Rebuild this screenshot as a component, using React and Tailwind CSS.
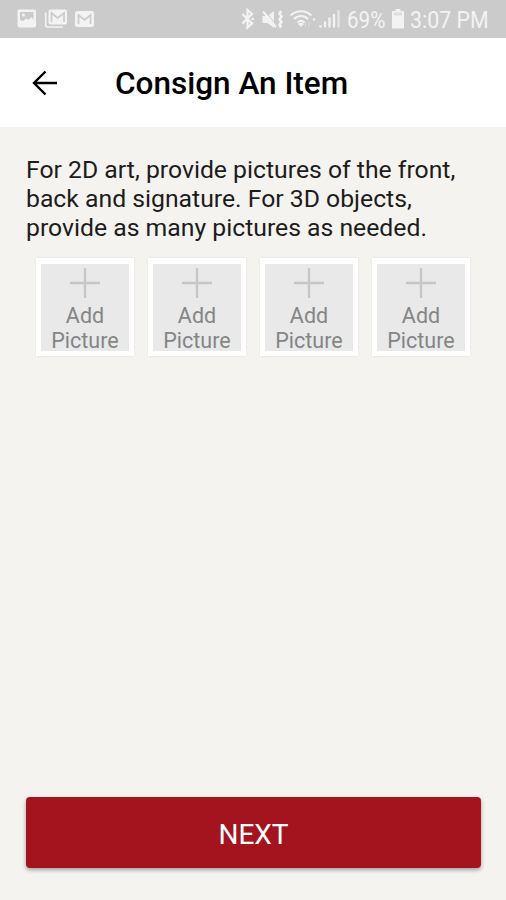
import React, { useState } from 'react';

const StatusBar = () => {
    return (
        <div className="h-[38px] bg-[#cbcbcb] flex items-center justify-between pl-[17px] pr-[17px] text-[#f3f3f3]">
            <svg width="78" height="22" viewBox="0 0 78 22" fill="none">
                {/* gallery */}
                <rect x="0.500" y="1.500" width="18.500" height="18" rx="2" fill="currentColor" />
                <path d="M3 4h13.500v8l-2-3-3 3-2-1.500L6 13l-3-1z" fill="#cbcbcb" />
                <circle cx="6.500" cy="7" r="1.500" fill="currentColor" />
                {/* stacked mail */}
                <path d="M28.700 4.500V17a2 2 0 0 0 2 2H46" stroke="currentColor" strokeWidth="1.600" />
                <rect x="31.500" y="1.500" width="18.500" height="15" rx="2" fill="currentColor" />
                <path d="M34.500 14V5l6.200 5L47 5v9" stroke="#cbcbcb" strokeWidth="1.700" />
                {/* mail */}
                <rect x="58" y="3" width="19" height="16" rx="2.500" fill="currentColor" />
                <path d="M61.500 16V7l6 5 6-5v9" stroke="#cbcbcb" strokeWidth="1.700" />
            </svg>
            <div className="flex items-center">
                <svg width="102" height="24" viewBox="0 0 102 24" fill="none" className="mr-[5px]">
                    {/* bluetooth */}
                    <path d="M2.500 7L12 16.500 7.500 20.500V3L12 7 2.500 16.500" stroke="currentColor" strokeWidth="2.300" />
                    <path d="M11.500 12h2.500" stroke="currentColor" strokeWidth="2" />
                    {/* muted speaker with vibration */}
                    <path d="M22.500 9h5l6.500-5v17l-6.500-5h-5z" fill="currentColor" />
                    <path d="M25.500 4.500L36 17.500" stroke="#cbcbcb" strokeWidth="1" />
                    <path d="M23 4.500L36 20" stroke="currentColor" strokeWidth="2" />
                    <path d="M41 4l-1.500 2.700L41.500 9.500l-2 2.700 2 2.700-2 2.700 1.500 3" stroke="currentColor" strokeWidth="2.600" />
                    {/* wifi */}
                    <path d="M50.500 8.500c6-5.800 15-5.800 21 0M54 12c4-4 10-4 14 0M57.500 15.500c2.200-2 4.800-2 7 0" stroke="currentColor" strokeWidth="2" />
                    <path d="M58 17c1.800-1.600 4.200-1.600 6 0l-3 3z" fill="currentColor" />
                    <path d="M65.500 15v5M69 15v5" stroke="#dadada" strokeWidth="1" />
                    <rect x="73" y="11.500" width="2" height="2" fill="currentColor" />
                    {/* signal */}
                    <path d="M80.500 20.500v-2.500M85 20.500v-6M89.500 20.500V10.500M94 20.500V7" stroke="currentColor" strokeWidth="2.300" />
                    <path d="M98.500 20.500V3" stroke="#e6e6e6" strokeWidth="2.300" />
                </svg>
                <span className="w-[40px] pt-0.5 text-[24px] leading-none whitespace-nowrap">
                    <span className="inline-block origin-left scale-x-[0.86]">69%</span>
                </span>
                <svg width="14" height="22" viewBox="0 0 14 22" className="ml-1 mr-[5px]">
                    <path d="M4.500 1h5v2H12a1 1 0 0 1 1 1v15.500a1 1 0 0 1-1 1H2a1 1 0 0 1-1-1V4a1 1 0 0 1 1-1h2.500z" fill="currentColor" />
                    <path d="M3 4.500h8v3H3z" fill="#dcdcdc" />
                </svg>
                <span className="w-[79px] pt-0.5 text-[24px] leading-none whitespace-nowrap">
                    <span className="inline-block origin-left scale-x-[0.89]">3:07 PM</span>
                </span>
            </div>
        </div>
    );
};

const PictureSlot = ({ onClick }) => {
    return (
        <button
            onClick={onClick}
            className="w-[98px] h-[98px] bg-[#e8e9e8] border-[5px] border-t-[6px] border-white shadow-[0_0_2px_rgba(0,0,0,0.1)] flex flex-col items-center text-[21.5px] leading-[25px] text-[#858585]"
        >
            <svg width="32" height="32" viewBox="0 0 32 32" className="mt-[3px] mb-1 shrink-0">
                <path d="M16 1v30M1 16h30" stroke="#c6c6c6" strokeWidth="2.300" />
            </svg>
            <span>Add</span>
            <span>Picture</span>
        </button>
    );
};

const ConsignItemPage = () => {
    const [selectedSlot, setSelectedSlot] = useState(null);

    return (
        <div className="w-full h-screen flex flex-col bg-[#f5f3ef] font-['Roboto',sans-serif]" data-slot={selectedSlot}>
            <StatusBar />
            <header className="h-[89px] bg-white flex items-center">
                <button className="ml-8 w-[26px]" aria-label="Back">
                    <svg width="26" height="26" viewBox="0 0 26 26" fill="none">
                        <path d="M25 13H2M13.500 1.500L2 13l11.500 11.500" stroke="#000" strokeWidth="2.400" />
                    </svg>
                </button>
                <h1 className="ml-[57px] pt-0.5 text-[31.5px] leading-none font-medium text-black">Consign An Item</h1>
            </header>
            <main className="flex-1 flex flex-col pl-[26px] pr-[25px] pt-7 pb-8">
                <p className="text-[24.75px] leading-[29px] text-[#1c1c1c]">
                    For 2D art, provide pictures of the front,
                    <br />
                    back and signature. For 3D objects,
                    <br />
                    provide as many pictures as needed.
                </p>
                <div className="mt-4 ml-2.5 flex gap-3.5">
                    {[0, 1, 2, 3].map((slot) => (
                        <PictureSlot key={slot} onClick={() => setSelectedSlot(slot)} />
                    ))}
                </div>
                <button className="mt-auto h-[71px] w-full rounded bg-[#a3141f] pt-1 text-[28px] leading-none text-white shadow-[0_2px_4px_rgba(0,0,0,0.35)]">
                    NEXT
                </button>
            </main>
        </div>
    );
};

export default ConsignItemPage;
